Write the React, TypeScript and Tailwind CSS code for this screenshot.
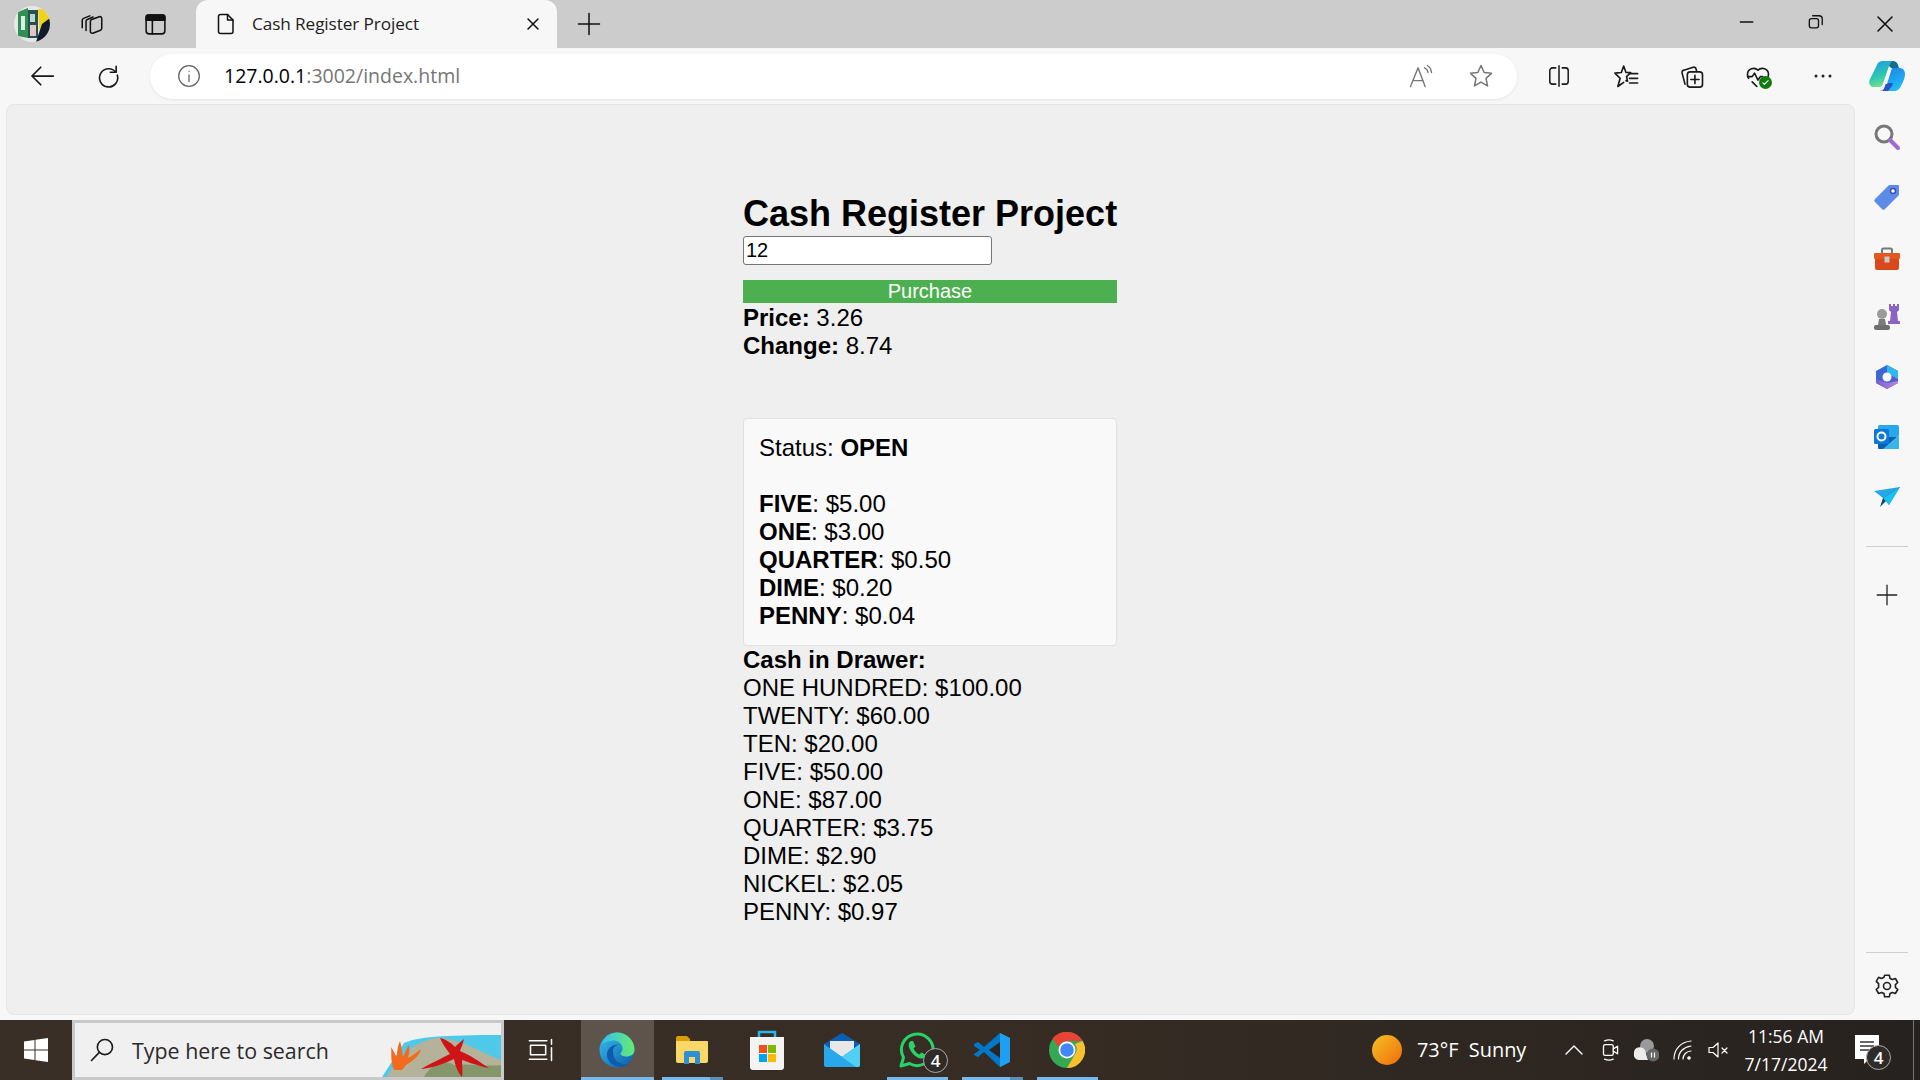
import type { ReactNode } from 'react';

const ui = 'font-["Open_Sans",sans-serif]';

const Ico = ({ size = 24, children, vb = '0 0 24 24', sw = 1.5, stroke = 'currentColor' }: { size?: number; children: ReactNode; vb?: string; sw?: number; stroke?: string }) => (
  <svg width={size} height={size} viewBox={vb} fill="none" stroke={stroke} strokeWidth={sw} strokeLinecap="round" strokeLinejoin="round">{children}</svg>
);

const Avatar = () => (
  <svg width="36" height="36" viewBox="0 0 36 36">
    <defs><clipPath id="av"><circle cx="18" cy="18" r="18" /></clipPath></defs>
    <g clipPath="url(#av)">
      <rect width="36" height="36" fill="#e4e9e4" />
      <path d="M4 6l10-4v30l-10-2z" fill="#2f8f55" />
      <path d="M7 10h4v14H7z" fill="#dfeee2" />
      <path d="M14 4h10v28H14z" fill="#27504f" />
      <path d="M16 8h5v8h-5z" fill="#b9d7d2" />
      <path d="M16 19h6v11h-6z" fill="#e2c8c4" />
      <path d="M24 3h6l6 10v4L26 30z" fill="#eed21c" />
      <path d="M22 36l6-18 8-6v24z" fill="#101a2c" />
    </g>
  </svg>
);

const CopilotLogo = () => (
  <svg width="36" height="32" viewBox="0 0 36 32">
    <defs>
      <linearGradient id="cp1" x1="0.2" y1="0" x2="0.5" y2="1"><stop offset="0" stopColor="#1b9de2" /><stop offset=".6" stopColor="#2fc9b0" /><stop offset="1" stopColor="#7ae08f" /></linearGradient>
      <linearGradient id="cp2" x1="0.2" y1="0" x2="0.8" y2="1"><stop offset="0" stopColor="#1c7fe8" /><stop offset="1" stopColor="#22c3f3" /></linearGradient>
    </defs>
    <path d="M14 1h11c-3 0-4 2-5 5l-6 18c-1 2-2 3-4 3H5C1 27-1 23 1 19L8 5c1-3 3-4 6-4z" fill="url(#cp1)" />
    <path d="M24 1c2 0 4 1 5 4l1 3h-8l-2-2c1-3 2-5 4-5z" fill="#0e6e8f" />
    <path d="M22 8h9c3 0 5 3 5 6 0 4-2 8-4 12-2 4-4 5-7 5H10c3 0 5-1 6-4l6-19z" fill="url(#cp2)" />
    <path d="M12 31c2 0 3-2 4-5l1-3h7l-1 3-4 5z" fill="#2855c8" />
    <path d="M20 8h3l-5 16h-4z" fill="#f7f7f7" />
  </svg>
);

const TabStrip = () => (
  <div className="flex h-12 items-center bg-[#cccccc] text-[#111]">
    <div className="-ml-[1px] flex w-[66px] justify-center"><Avatar /></div>
    <div className="flex w-[54px] justify-center">
      <Ico sw={1.4} size={26}>
        <path d="M3 15.500V8.500c0-.8.4-1.400 1.200-1.700L10 4.500" />
        <path d="M6.500 18V9.500c0-.8.400-1.400 1.200-1.700L13 5.500" />
        <path d="M10.500 9.500c0-.8.400-1.400 1.200-1.700l7-2.500c1.200-.4 2.300.400 2.300 1.600V16c0 .800-.4 1.400-1.200 1.700l-7 2.800c-1.200.4-2.300-.4-2.300-1.600z" />
      </Ico>
    </div>
    <div className="flex w-[72px] justify-center pl-[1px]">
      <Ico size={25}>
        <rect x="3" y="3" width="18" height="18" rx="3" />
        <path d="M3 4.500A1.500 1.500 0 0 1 4.500 3h15A1.500 1.500 0 0 1 21 4.500V8H3z" fill="currentColor" />
        <path d="M9 8v13" />
      </Ico>
    </div>
    <div className="ml-[5px] flex h-12 w-[361px] items-center rounded-t-xl bg-[#f7f7f7]">
      <div className="ml-[18px] flex w-[38px]">
        <Ico>
          <path d="M6.500 2.500h7L19 8v11.500a2 2 0 0 1-2 2H6.500a2 2 0 0 1-2-2v-15a2 2 0 0 1 2-2z" />
          <path d="M13.500 2.500V8H19" />
        </Ico>
      </div>
      <span className={`${ui} text-[17.2px] tracking-[-0.1px] text-[#222]`}>Cash Register Project</span>
      <div className="ml-auto mr-[14px] flex">
        <Ico size={20} sw={1.8}><path d="M6 6l12 12M18 6 6 18" /></Ico>
      </div>
    </div>
    <div className="ml-[18px] flex">
      <Ico size={28} sw={1.3}><path d="M12 3v18M3 12h18" /></Ico>
    </div>
    <div className="ml-auto flex">
      <div className="flex w-[69px] justify-center"><Ico size={20} sw={1.6}><path d="M4 12h15" /></Ico></div>
      <div className="flex w-[69px] justify-center">
        <Ico size={20} sw={1.6}>
          <rect x="4" y="8" width="11" height="11" rx="2.500" />
          <path d="M8 4.500h7.500A4 4 0 0 1 19.500 8.500V15" />
        </Ico>
      </div>
      <div className="flex w-[70px] justify-center"><Ico size={24} sw={1.6}><path d="M5 5l14 14M19 5 5 19" /></Ico></div>
    </div>
  </div>
);

const AddressBar = () => (
  <div className="flex h-14 items-center bg-[#f7f7f7] text-[#1a1a1a]">
    <div className="flex w-[84px] justify-center"><Ico size={30} sw={1.4}><path d="M21 12H4M11 5l-7 7 7 7" /></Ico></div>
    <div className="-mt-[5px] flex w-[48px] justify-center"><Ico size={28} sw={1.4}><path d="M19 5.500v5h-5" /><path d="M18.700 10.500A7.800 7.800 0 1 0 20 13" /></Ico></div>
    <div className="ml-[18px] flex h-[45px] w-[1367px] items-center rounded-full bg-white shadow-[0_1px_3px_rgba(0,0,0,0.08)]">
      <div className="ml-[26px] flex w-[48px] text-[#666]">
        <Ico size={26} sw={1.2}><circle cx="12" cy="12" r="9.500" /><path d="M12 11v6M12 7.500v.2" /></Ico>
      </div>
      <span className={`${ui} text-[19.5px] text-[#767676]`}><span className="text-black">127.0.0.1</span>:3002/index.html</span>
      <div className="ml-auto flex w-[60px] justify-center text-[#777]">
        <Ico size={28} sw={1.2}>
          <path d="M3 21 9.500 5l6 16M5.300 16h8.500" />
          <path d="M15 5a5 5 0 0 1 3 4M17.500 3a8 8 0 0 1 3.500 6" />
        </Ico>
      </div>
      <div className="mr-[6px] flex w-[60px] justify-center text-[#777]">
        <Ico size={28} sw={1.3}><path d="m12 3 2.700 6 6.300.7-4.700 4.300 1.300 6.500L12 17.200 6.400 20.500 7.700 14 3 9.700 9.300 9z" /></Ico>
      </div>
    </div>
    <div className="ml-[8px] flex w-[68px] justify-center">
      <Ico size={26} sw={1.4}><path d="M9 4.500H6a2.500 2.500 0 0 0-2.500 2.500v10A2.500 2.500 0 0 0 6 19.500h3M15 4.500h3A2.500 2.500 0 0 1 20.500 7v10a2.500 2.500 0 0 1-2.500 2.500h-3M12 2.500v19" /></Ico>
    </div>
    <div className="flex w-[66px] justify-center">
      <Ico size={28} sw={1.4}><path d="m10 3.500 2 5.500h4l-3.500 3.500.8 4-1.300-.5M10 3.500 8 9l-5.500.5 4.500 4.500-2 7 5-3.500" /><path d="M15 10h7M15 14h7M15 18h7" /></Ico>
    </div>
    <div className="flex w-[66px] justify-center">
      <Ico size={28} sw={1.4}>
        <path d="M6 19 3.500 9.500A2 2 0 0 1 5 7l8-2.500a2 2 0 0 1 2.500 1.500l.5 2" />
        <rect x="8" y="8.500" width="13" height="13" rx="2.500" />
        <path d="M14.500 11.500v7M11 15h7" />
      </Ico>
    </div>
    <div className="relative flex w-[66px] justify-center">
      <Ico size={28} sw={1.4}>
        <path d="M4 14a6 6 0 0 1-1-3.500A5.300 5.300 0 0 1 12 7a5.300 5.300 0 0 1 9 3.500c0 1-.2 2-.7 3" />
        <path d="M3 12.500h4l2-3 3 6 2-3h2M7 17l4 4" />
      </Ico>
      <div className="absolute left-[34px] top-[14px] flex h-[13px] w-[13px] items-center justify-center rounded-full bg-[#107c10]">
        <Ico size={9} sw={3} stroke="#fff"><path d="m5 13 4 4 10-10" /></Ico>
      </div>
    </div>
    <div className="flex w-[64px] justify-center">
      <svg width="20" height="6" viewBox="0 0 20 6" fill="#222"><circle cx="3" cy="3" r="1.500" /><circle cx="10" cy="3" r="1.500" /><circle cx="17" cy="3" r="1.500" /></svg>
    </div>
    <div className="flex w-[64px] justify-center"><CopilotLogo /></div>
  </div>
);

const SideIcon = ({ children }: { children: ReactNode }) => (
  <div className="flex h-[60px] items-center justify-center">{children}</div>
);

const Sidebar = () => (
  <div className="-ml-[1px] flex w-[66px] flex-col items-center pt-[3px]">
    <SideIcon>
      <svg width="28" height="28" viewBox="0 0 28 28" fill="none">
        <circle cx="11" cy="11" r="8" stroke="#777" strokeWidth="3" />
        <path d="M17 17l8 8" stroke="#a06bd0" strokeWidth="4" strokeLinecap="round" />
      </svg>
    </SideIcon>
    <SideIcon>
      <svg width="28" height="28" viewBox="0 0 28 28">
        <path d="M16 2h9a1 1 0 0 1 1 1v9L12 26a2 2 0 0 1-3 0l-7-7a2 2 0 0 1 0-3z" fill="#5b8de8" />
        <circle cx="20" cy="8" r="2.500" fill="#fff" stroke="#3f4fb0" strokeWidth="1.500" />
      </svg>
    </SideIcon>
    <SideIcon>
      <div className="mt-[3px] flex">
        <svg width="28" height="24" viewBox="0 0 28 24">
          <path d="M9 6V3a1.500 1.500 0 0 1 1.500-1.500h7A1.500 1.500 0 0 1 19 3v3" fill="none" stroke="#777" strokeWidth="2" />
          <rect x="1" y="6" width="26" height="6" rx="1" fill="#e2591f" />
          <path d="M2 12h24v9a2 2 0 0 1-2 2H4a2 2 0 0 1-2-2z" fill="#d9481a" />
          <rect x="11.500" y="9.500" width="5" height="6" fill="#c9c9c9" />
        </svg>
      </div>
    </SideIcon>
    <SideIcon>
      <svg width="28" height="28" viewBox="0 0 28 28">
        <path d="M16 1h2v2h2V1h2v2h2V1h2v6l-2 2 1 9h2v3H15v-3h2l1-9-2-2z" fill="#8b63c4" />
        <circle cx="9" cy="11" r="5" fill="#9a9a9a" />
        <path d="M6 16h6l1 6H5z" fill="#7c7c7c" />
        <rect x="1" y="22" width="16" height="5" rx="2" fill="#6f6f6f" />
      </svg>
    </SideIcon>
    <SideIcon>
      <svg width="26" height="26" viewBox="0 0 26 26">
        <defs>
          <linearGradient id="m1" x1="0" y1="0" x2="1" y2="1"><stop offset="0" stopColor="#2a72d8" /><stop offset="1" stopColor="#6a4ec8" /></linearGradient>
          <linearGradient id="m2" x1="0" y1="0" x2="1" y2="0"><stop offset="0" stopColor="#7a5ecf" /><stop offset="1" stopColor="#b58ae0" /></linearGradient>
        </defs>
        <path d="M13 1 24 7v12l-11 6L2 19V7z" fill="url(#m1)" />
        <path d="M13 1 24 7v8l-6-3-5-4z" fill="#2fb8ee" />
        <path d="M2 15l11 4 11-2v2l-11 6-11-6z" fill="url(#m2)" />
        <circle cx="13" cy="13" r="4.500" fill="#f7f7f7" />
      </svg>
    </SideIcon>
    <SideIcon>
      <svg width="26" height="26" viewBox="0 0 26 26">
        <rect x="4" y="1" width="21" height="24" rx="1.500" fill="#28a8ea" />
        <path d="M4 13h21v10.500a1.500 1.500 0 0 1-1.500 1.500h-18A1.500 1.500 0 0 1 4 23.500z" fill="#0a5fb4" />
        <path d="M25 11v14H9z" fill="#50d9ff" opacity=".7" />
        <rect x="0" y="5" width="15" height="15" rx="1.500" fill="#0f78d4" />
        <circle cx="7.500" cy="12.500" r="4" fill="none" stroke="#fff" strokeWidth="2" />
      </svg>
    </SideIcon>
    <SideIcon>
      <svg width="28" height="22" viewBox="0 0 28 22">
        <path d="M1 5l26-4-11 18-6-7z" fill="#27a6e8" />
        <path d="M27 1 10 12l-3 9 4-4z" fill="#16476e" />
        <path d="M27 1 10 12l6 7z" fill="#1cc0ee" />
      </svg>
    </SideIcon>
    <div className="mt-[19px] h-px w-[42px] bg-[#cfcfcf]" />
    <div className="mt-[35px] flex text-[#222]"><Ico size={26} sw={1.2}><path d="M12 3v18M3 12h18" /></Ico></div>
    <div className="mt-auto h-px w-[42px] bg-[#cfcfcf]" />
    <div className="mb-[20px] mt-[19px] flex text-[#222]">
      <Ico size={28} sw={1.4}>
        <circle cx="12" cy="12" r="3" />
        <path d="M10 2.800h4l.6 2.700 2 1 2.600-.9 2 3.400-2 1.900v2.200l2 1.900-2 3.400-2.600-.9-2 1-.6 2.700h-4l-.6-2.700-2-1-2.600.9-2-3.400 2-1.900V10L2.800 8l2-3.400 2.600.9 2-1z" />
      </Ico>
    </div>
  </div>
);

const drawer = [
  ['ONE HUNDRED', '$100.00'],
  ['TWENTY', '$60.00'],
  ['TEN', '$20.00'],
  ['FIVE', '$50.00'],
  ['ONE', '$87.00'],
  ['QUARTER', '$3.75'],
  ['DIME', '$2.90'],
  ['NICKEL', '$2.05'],
  ['PENNY', '$0.97'],
];

const given = [
  ['FIVE', '$5.00'],
  ['ONE', '$3.00'],
  ['QUARTER', '$0.50'],
  ['DIME', '$0.20'],
  ['PENNY', '$0.04'],
];

const Page = () => (
  <div className='flex-1 rounded-lg border border-[#e6e6e6] bg-[#efefef] pt-[88px] font-["Liberation_Sans",sans-serif] text-[24px] leading-[28px] text-black'>
    <div className="ml-[736px] w-[374px]">
      <h1 className="whitespace-nowrap text-[36px] font-bold leading-[42px]">Cash Register Project</h1>
      <input
        readOnly
        value="12"
        className="mt-[1px] block h-[29px] w-[249px] rounded-[3px] border border-[#767676] bg-white px-[2px] text-[20px] leading-[23px]"
      />
      <button className="mt-[15px] block h-[23px] w-full bg-[#4caf50] text-center text-[20px] leading-[23px] text-white">Purchase</button>
      <div className="mt-px"><b>Price:</b> 3.26</div>
      <div><b>Change:</b> 8.74</div>
      <div className="mt-[58px] rounded-[4px] border border-[#e0e0e0] bg-[#f9f9f9] p-[15px]">
        <div>Status: <b>OPEN</b></div>
        <div className="mt-[28px]">
          {given.map(([name, amount]) => (
            <div key={name}><b>{name}</b>: {amount}</div>
          ))}
        </div>
      </div>
      <div><b>Cash in Drawer:</b></div>
      {drawer.map(([name, amount]) => (
        <div key={name}>{name}: {amount}</div>
      ))}
    </div>
  </div>
);

const TaskItem = ({ children, line = false, stack = false }: { children: ReactNode; line?: boolean; stack?: boolean }) => (
  <div className="relative flex h-[60px] w-[75px] items-center justify-center">
    {children}
    {line && (
      <div className="absolute bottom-0 left-[8px] flex h-[3px] w-[61px]">
        <div className="flex-1 bg-[#76b9ed]" />
        {stack && <div className="w-[13px] bg-[#5a8fb8]" />}
      </div>
    )}
  </div>
);

const Badge = () => (
  <div className={`flex h-[25px] w-[25px] items-center justify-center rounded-full border border-[#aaa] bg-[#2f2b28] ${ui} text-[17px] font-semibold leading-none text-white`}>4</div>
);

const EdgeLogo = () => (
  <svg width="36" height="36" viewBox="0 0 36 36">
    <defs>
      <linearGradient id="e1" x1="0" y1="0" x2="1" y2="1"><stop offset="0" stopColor="#35c1f1" /><stop offset="1" stopColor="#0c59a4" /></linearGradient>
      <linearGradient id="e2" x1="0" y1="0" x2="1" y2="0"><stop offset="0" stopColor="#35c1f1" /><stop offset="1" stopColor="#66eb6e" /></linearGradient>
    </defs>
    <circle cx="18" cy="18" r="17.500" fill="url(#e1)" />
    <path d="M3 12C6 3 14 .5 18 .5c10 0 17.500 8 17.500 17 0 5-4 7-8 7-3 0-6-1-6-3 0-1 2-1.500 2-5 0-4-4-8-9-8-6 0-10 3-11.500 3.500z" fill="url(#e2)" />
    <path d="M14 19c0-4 3-6 6-6-7-1-12 4-12 10 0 7 7 12 14 12 3 0 6-1 8-3-3 1-16 1-16-13z" fill="#0f5bab" />
  </svg>
);

const SearchArt = () => (
  <svg width="119" height="42" viewBox="0 0 119 42" className="absolute bottom-0 right-0">
    <path d="M0 42 22 8C35 2 60 0 119 0v42z" fill="#4fc9ea" />
    <path d="M5 42C18 18 38 4 56 3c24 1 44 15 63 22v17z" fill="#b5b29a" />
    <path d="M42 42c8-14 20-18 30-12 18-2 33 2 47 0v12z" fill="#86966b" />
    <path d="M12 35C8 25 10 18 9 12c3 4 4 8 6 10 0-7 1-12 3-16 2 6 2 12 3 16 2-4 4-10 6-12 1 5 0 9-1 13 4-2 8-5 13-9-2 8-9 12-15 16l-4 5z" fill="#f26a1e" />
    <path d="M58 3c8 2 12 6 15 9 3-3 6-6 9-8-1 5-3 9-4 12 10 4 20 11 29 17-11-2-21-6-27-8 0 5 1 11 0 17-4-4-7-12-8-18-10 5-22 9-33 10 9-5 21-11 29-15-4-5-8-11-10-16z" fill="#cf1418" />
  </svg>
);

const Taskbar = () => (
  <div className="flex h-[60px] items-center bg-gradient-to-r from-[#3a2f26] via-[#382d24] to-[#26221f]">
    <div className="flex w-[72px] justify-center">
      <svg width="24" height="24" viewBox="0 0 24 24" fill="#fff"><path d="M0 3.500 10.500 2v9.500H0zM11.500 1.800 24 0v11.500H11.500zM0 12.500h10.500V22L0 20.500zM11.500 12.500H24V24l-12.500-1.800z" /></svg>
    </div>
    <div className="relative flex h-[60px] w-[432px] items-center overflow-hidden border-[3px] border-[#c9c9c9] bg-[#f0f0f0]">
      <div className="ml-[13px] flex w-[44px] text-[#1a1a1a]">
        <Ico size={28} sw={1.4}><circle cx="14.500" cy="9.500" r="6.500" /><path d="M9.700 14 3 21" /></Ico>
      </div>
      <span className={`${ui} mt-[3px] text-[21.4px] text-[#2a2a2a]`}>Type here to search</span>
      <SearchArt />
    </div>
    <div className="flex w-[77px] justify-center pr-[4px] text-white">
      <Ico size={28} sw={1.3}>
        <path d="M2 4h15M2 20h15M3 8h13v8H3zM21 3v4M21 10v11" />
      </Ico>
    </div>
    <div className="relative flex h-[60px] w-[73px] items-center justify-center bg-[#5e544c]">
      <div className="-ml-[1px] flex"><EdgeLogo /></div>
      <div className="absolute bottom-0 left-0 h-[3px] w-full bg-[#76b9ed]" />
    </div>
    <TaskItem line stack>
      <svg width="34" height="32" viewBox="0 0 34 32">
        <path d="M1 4a2 2 0 0 1 2-2h9l3 3v6H1z" fill="#d99e0c" />
        <path d="M1 7h31a1 1 0 0 1 1 1v19a2 2 0 0 1-2 2H3a2 2 0 0 1-2-2z" fill="#fad868" />
        <path d="M9 30V19a2 2 0 0 1 2-2h12a2 2 0 0 1 2 2v11h-5v-7h-6v7z" fill="#2d8fd5" />
      </svg>
    </TaskItem>
    <TaskItem>
      <svg width="36" height="42" viewBox="0 0 36 42">
        <path d="M10 9V3h16v6" fill="none" stroke="#2bb4ee" strokeWidth="2.500" />
        <path d="M1 8h34v30a3 3 0 0 1-3 3H4a3 3 0 0 1-3-3z" fill="#f4f4f4" />
        <rect x="10" y="16" width="8" height="8" fill="#f25022" />
        <rect x="19" y="16" width="8" height="8" fill="#7fba00" />
        <rect x="10" y="25" width="8" height="8" fill="#00a4ef" />
        <rect x="19" y="25" width="8" height="8" fill="#ffb900" />
      </svg>
    </TaskItem>
    <TaskItem>
      <svg width="36" height="34" viewBox="0 0 36 34">
        <path d="M18 0 36 11v22H0V11z" fill="#0a5fb4" />
        <path d="M6 8h24v8L18 24 6 16z" fill="#e8e8e8" />
        <path d="M0 11l18 13 18-13v21a2 2 0 0 1-2 2H2a2 2 0 0 1-2-2z" fill="#28a8ea" />
        <path d="M36 11v21a2 2 0 0 1-2 2h-2L18 24z" fill="#50d0f5" />
      </svg>
    </TaskItem>
    <TaskItem line>
      <svg width="36" height="36" viewBox="0 0 36 36" fill="none">
        <path d="M2 34l2.500-8.500A15.800 15.800 0 1 1 10.500 31.500z" stroke="#25d366" strokeWidth="3" strokeLinejoin="round" />
        <path d="M12 9c-2.500 1-3 4-1 8.500 2 4 6 8 10.500 9 3 .5 5.500-1 5.500-3.500l-4.500-2.500-2.300 2c-2.300-1-4.700-3.500-5.700-6l2-2L14 9z" fill="#25d366" />
      </svg>
      <div className="absolute left-[44px] top-[28px]"><Badge /></div>
    </TaskItem>
    <TaskItem line stack>
      <svg width="36" height="36" viewBox="0 0 36 36">
        <path d="M26 1 36 6v24l-10 5L10 20l-6 5-4-2v-1l6-4-6-4v-2l4-2 6 5z" fill="#0078c9" />
        <path d="M26 1 36 6v24l-10 5z" fill="#1f9ff0" />
        <path d="M26 10 15 18l11 8z" fill="#2c2621" />
      </svg>
    </TaskItem>
    <TaskItem line>
      <svg width="36" height="36" viewBox="0 0 36 36">
        <circle cx="18" cy="18" r="18" fill="#34a853" />
        <path d="M18 0a18 18 0 0 1 15.600 9H18a9 9 0 0 0-8.500 6L3.500 6.500A18 18 0 0 1 18 0z" fill="#ea4335" />
        <path d="M33.600 9A18 18 0 0 1 18 36l7.800-13.500A9 9 0 0 0 26 12z" fill="#fbc02d" />
        <circle cx="18" cy="18" r="8.500" fill="#fff" />
        <circle cx="18" cy="18" r="6.800" fill="#4285f4" />
      </svg>
    </TaskItem>
    <div className="ml-[268px] flex h-[30px] w-[30px] rounded-full bg-gradient-to-br from-[#f4c025] to-[#ec6a08]" />
    <span className={`${ui} ml-[15px] w-[139px] text-[19.9px] text-white`}>73°F&nbsp; Sunny</span>
    <div className="flex w-[36px] justify-center text-white"><Ico size={24} sw={1.4}><path d="M4 16l8-8 8 8" /></Ico></div>
    <div className="flex w-[36px] justify-center text-white">
      <Ico size={26} sw={1.2}>
        <rect x="6" y="7" width="9" height="10" rx="1.500" />
        <path d="m15 11 4-2.500v7L15 13M7 3.500a10 10 0 0 1 8 0M7 20.500a10 10 0 0 0 8 0" />
      </Ico>
    </div>
    <div className="relative flex w-[36px] justify-center">
      <svg width="26" height="24" viewBox="0 0 26 24">
        <circle cx="14" cy="8" r="7" fill="#9a9a9a" />
        <path d="M1 16a6 6 0 0 1 11-4l3 10H6a5 5 0 0 1-5-6z" fill="#ececec" />
        <circle cx="20" cy="17" r="6.500" fill="#666" />
        <path d="M18.500 14.500v5M21.500 14.500v5" stroke="#fff" strokeWidth="1.200" />
      </svg>
    </div>
    <div className="ml-[1px] flex w-[35px] justify-center text-white">
      <Ico size={24} sw={1.2}>
        <path d="M3 21C3 11 10 4 20 3M7.500 21c0-7 5-12 12.500-13M12 21c0-4 3.500-8 8-8" />
        <circle cx="18" cy="20" r="1.200" fill="currentColor" />
      </Ico>
    </div>
    <div className="flex w-[35px] justify-center text-white">
      <Ico size={24} sw={1.2}><path d="M3 9.500h4L12 5v14l-5-4.500H3zM16 10l5 5M21 10l-5 5" /></Ico>
    </div>
    <div className={`${ui} w-[102px] text-center text-[17.5px] leading-[28px] text-white`}>
      <div>11:56 AM</div>
      <div>7/17/2024</div>
    </div>
    <div className="relative ml-[12px] flex w-[36px] justify-center">
      <svg width="24" height="30" viewBox="0 0 24 30">
        <path d="M0 0h24v24H14l-5 5v-5H0z" fill="#fff" />
        <path d="M5 7h14M5 11h14M5 15h9" stroke="#333" strokeWidth="1.300" />
      </svg>
      <div className="absolute left-[17px] top-[10px]"><Badge /></div>
    </div>
    <div className="ml-auto mr-[6px] h-full w-px bg-[#777]" />
  </div>
);

export default function App() {
  return (
    <div className="flex h-screen w-screen flex-col overflow-hidden bg-[#f7f7f7]">
      <TabStrip />
      <AddressBar />
      <div className="flex h-[916px]">
        <div className="flex flex-1 pb-[5px] pl-[6px]"><Page /></div>
        <Sidebar />
      </div>
      <Taskbar />
    </div>
  );
}
